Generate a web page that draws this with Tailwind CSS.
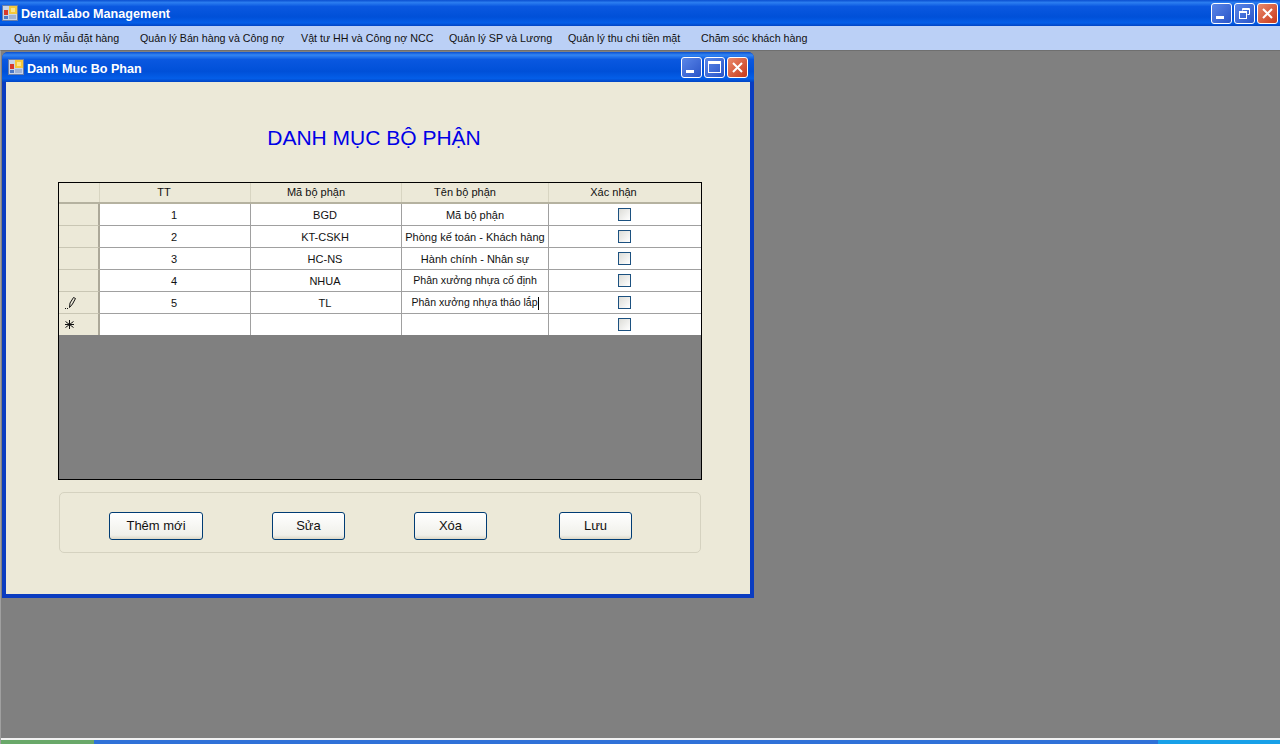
<!DOCTYPE html>
<html lang="en">
<head>
    <meta charset="UTF-8">
    <title>DentalLabo Management</title>
    <script src="https://cdn.jsdelivr.net/npm/@tailwindcss/browser@4"></script>
</head>
<body class="w-[1280px] h-[744px] overflow-hidden flex flex-col bg-[#808080] font-['Liberation_Sans',sans-serif]">

    <!-- main window title bar -->
    <header class="h-[26px] shrink-0 flex items-center pl-[2px] pr-[2px] bg-[linear-gradient(180deg,#0a4fd0_0%,#2b7df0_10%,#0a58e0_25%,#0050d8_65%,#045ee8_88%,#0044c4_100%)]">
        <svg width="16" height="16" viewBox="0 0 16 16" class="shrink-0">
            <rect x="0.5" y="0.5" width="15" height="15" fill="#c8d4e8" stroke="#6a7fa8"/>
            <rect x="7" y="1" width="8" height="8" fill="#f6c83a"/>
            <rect x="9" y="3" width="4" height="4" fill="#fbe58c"/>
            <rect x="2" y="5" width="4" height="5" fill="#d8392b"/>
            <rect x="2" y="11" width="4" height="3" fill="#4a78c8"/>
            <rect x="7" y="10" width="7" height="4" fill="#9fb2d4"/>
        </svg>
        <span class="ml-[3px] pt-[2px] text-[12.6px] font-bold text-white">DentalLabo Management</span>
        <div class="ml-auto flex gap-[2px]">
            <button class="w-[21px] h-[21px] rounded-[3px] border border-white bg-[linear-gradient(135deg,#5a86e8,#2a55c8)] flex items-end pl-[4px] pb-[4px]">
                <span class="block w-[8px] h-[3px] bg-white"></span>
            </button>
            <button class="w-[21px] h-[21px] rounded-[3px] border border-white bg-[linear-gradient(135deg,#5a86e8,#2a55c8)] flex items-center justify-center">
                <svg width="13" height="13" viewBox="0 0 13 13" fill="none" stroke="#fff">
                    <path d="M4.5 3.5V1.5H11.5V7.5H9.5"/><path d="M4.5 2.5H11.5" stroke-width="1"/>
                    <rect x="1.5" y="4.5" width="7" height="7"/><path d="M1.5 5.5H8.5"/>
                </svg>
            </button>
            <button class="w-[21px] h-[21px] rounded-[3px] border border-white bg-[linear-gradient(135deg,#ea8a6c,#c8381a)] flex items-center justify-center">
                <svg width="13" height="13" viewBox="0 0 13 13" fill="none" stroke="#fff" stroke-width="2">
                    <path d="M2 2L11 11M11 2L2 11"/>
                </svg>
            </button>
        </div>
    </header>

    <!-- menu -->
    <nav class="h-[24px] shrink-0 flex items-center pl-[14px] bg-[#bbd0f6] text-[10.7px] text-[#111] whitespace-nowrap">
        <span class="w-[126px]">Quản lý mẫu đặt hàng</span>
        <span class="w-[161px]">Quản lý Bán hàng và Công nợ</span>
        <span class="w-[148px]">Vật tư HH và Công nợ NCC</span>
        <span class="w-[119px]">Quản lý SP và Lương</span>
        <span class="w-[133px]">Quản lý thu chi tiền mặt</span>
        <span>Chăm sóc khách hàng</span>
    </nav>

    <main class="flex-1 min-h-0 flex flex-col border-t border-[#6f6f6f] border-l border-l-[#a0a0a0] bg-[#808080]">
        <div class="flex-1 min-h-0 pl-[1px] pt-[1px]">
            <!-- child window -->
            <section class="w-[752px] h-[546px] flex flex-col rounded-t-[6px] overflow-hidden bg-[#0a3cc0]">
                <div class="h-[30px] shrink-0 flex items-center pl-[6px] pr-[5px] bg-[linear-gradient(180deg,#0a4fd0_0%,#3385f2_10%,#0a58e0_25%,#0050d8_65%,#045ee8_88%,#0044c4_100%)]">
                    <svg width="16" height="16" viewBox="0 0 16 16" class="shrink-0">
                        <rect x="0.5" y="0.5" width="15" height="15" fill="#c8d4e8" stroke="#6a7fa8"/>
                        <rect x="7" y="1" width="8" height="8" fill="#f6c83a"/>
                        <rect x="9" y="3" width="4" height="4" fill="#fbe58c"/>
                        <rect x="2" y="5" width="4" height="5" fill="#d8392b"/>
                        <rect x="2" y="11" width="4" height="3" fill="#4a78c8"/>
                        <rect x="7" y="10" width="7" height="4" fill="#9fb2d4"/>
                    </svg>
                    <span class="ml-[3px] pt-[4px] text-[12.6px] font-bold text-white">Danh Muc Bo Phan</span>
                    <div class="ml-auto flex gap-[2px] pr-[1px]">
                        <button class="w-[21px] h-[21px] rounded-[3px] border border-white bg-[linear-gradient(135deg,#5a86e8,#2a55c8)] flex items-end pl-[4px] pb-[4px]">
                            <span class="block w-[8px] h-[3px] bg-white"></span>
                        </button>
                        <button class="w-[21px] h-[21px] rounded-[3px] border border-white bg-[linear-gradient(135deg,#5a86e8,#2a55c8)] flex items-center justify-center">
                            <span class="block w-[13px] h-[12px] border border-white border-t-[3px]"></span>
                        </button>
                        <button class="w-[21px] h-[21px] rounded-[3px] border border-white bg-[linear-gradient(135deg,#ea8a6c,#c8381a)] flex items-center justify-center">
                            <svg width="13" height="13" viewBox="0 0 13 13" fill="none" stroke="#fff" stroke-width="2">
                                <path d="M2 2L11 11M11 2L2 11"/>
                            </svg>
                        </button>
                    </div>
                </div>

                <div class="flex-1 min-h-0 mx-[4px] mb-[4px] bg-[#ece9d8] px-[52px] flex flex-col">
                    <h1 class="h-[100px] shrink-0 flex items-center justify-center pt-[12px] pr-[8px] text-[21px] text-[#0000e6]">DANH MỤC BỘ PHẬN</h1>

                    <!-- data grid -->
                    <div class="w-[644px] h-[298px] shrink-0 border border-black bg-[#808080] text-[11px] text-[#111]">
                        <div class="grid grid-cols-[41px_151px_151px_147px_152px] h-[21px] bg-[#ece9d8] border-b-2 border-b-[#b5b2a0]">
                            <div class="border-r border-[#d8d5c2]"></div>
                            <div class="border-r border-[#d8d5c2] text-center leading-[18px] pr-[22px]">TT</div>
                            <div class="border-r border-[#d8d5c2] text-center leading-[18px] pr-[20px]">Mã bộ phận</div>
                            <div class="border-r border-[#d8d5c2] text-center leading-[18px] pr-[20px]">Tên bộ phận</div>
                            <div class="text-center leading-[18px] pr-[23px]">Xác nhận</div>
                        </div>

                        <div class="grid grid-cols-[41px_151px_151px_147px_152px] auto-rows-[22px]">
                            <div class="bg-[#ece9d8] border-r-2 border-r-[#aca899] border-b border-b-[#c9c6b4]"></div>
                            <div class="bg-white border-r border-b border-[#a0a0a0] flex items-center justify-center pr-[2px] pt-[1px]">1</div>
                            <div class="bg-white border-r border-b border-[#a0a0a0] flex items-center justify-center pr-[2px] pt-[1px]">BGD</div>
                            <div class="bg-white border-r border-b border-[#a0a0a0] flex items-center justify-center pt-[1px]">Mã bộ phận</div>
                            <div class="bg-white border-b border-[#a0a0a0] flex items-center pl-[69px]"><span class="block w-[13px] h-[13px] border border-[#1c5180] bg-[linear-gradient(135deg,#dcdcd7,#ffffff)]"></span></div>

                            <div class="bg-[#ece9d8] border-r-2 border-r-[#aca899] border-b border-b-[#c9c6b4]"></div>
                            <div class="bg-white border-r border-b border-[#a0a0a0] flex items-center justify-center pr-[2px] pt-[1px]">2</div>
                            <div class="bg-white border-r border-b border-[#a0a0a0] flex items-center justify-center pr-[2px] pt-[1px]">KT-CSKH</div>
                            <div class="bg-white border-r border-b border-[#a0a0a0] flex items-center justify-center pt-[1px] whitespace-nowrap">Phòng kế toán - Khách hàng</div>
                            <div class="bg-white border-b border-[#a0a0a0] flex items-center pl-[69px]"><span class="block w-[13px] h-[13px] border border-[#1c5180] bg-[linear-gradient(135deg,#dcdcd7,#ffffff)]"></span></div>

                            <div class="bg-[#ece9d8] border-r-2 border-r-[#aca899] border-b border-b-[#c9c6b4]"></div>
                            <div class="bg-white border-r border-b border-[#a0a0a0] flex items-center justify-center pr-[2px] pt-[1px]">3</div>
                            <div class="bg-white border-r border-b border-[#a0a0a0] flex items-center justify-center pr-[2px] pt-[1px]">HC-NS</div>
                            <div class="bg-white border-r border-b border-[#a0a0a0] flex items-center justify-center pt-[1px]">Hành chính - Nhân sự</div>
                            <div class="bg-white border-b border-[#a0a0a0] flex items-center pl-[69px]"><span class="block w-[13px] h-[13px] border border-[#1c5180] bg-[linear-gradient(135deg,#dcdcd7,#ffffff)]"></span></div>

                            <div class="bg-[#ece9d8] border-r-2 border-r-[#aca899] border-b border-b-[#c9c6b4]"></div>
                            <div class="bg-white border-r border-b border-[#a0a0a0] flex items-center justify-center pr-[2px] pt-[1px]">4</div>
                            <div class="bg-white border-r border-b border-[#a0a0a0] flex items-center justify-center pr-[2px] pt-[1px]">NHUA</div>
                            <div class="bg-white border-r border-b border-[#a0a0a0] flex items-center justify-center pt-[1px] text-[10.6px]">Phân xưởng nhựa cố định</div>
                            <div class="bg-white border-b border-[#a0a0a0] flex items-center pl-[69px]"><span class="block w-[13px] h-[13px] border border-[#1c5180] bg-[linear-gradient(135deg,#dcdcd7,#ffffff)]"></span></div>

                            <!-- row being edited -->
                            <div class="bg-[#ece9d8] border-r-2 border-r-[#aca899] border-b border-b-[#c9c6b4] flex items-center pl-[6px]">
                                <svg width="12" height="14" viewBox="0 0 12 14" fill="none" stroke="#111">
                                    <path d="M4.5 11.5L5 7L8.5 1.5L10.5 2.5L7.5 8L4.5 11.5Z"/>
                                    <path d="M0 12.5H1M2 12.5H3" />
                                </svg>
                            </div>
                            <div class="bg-white border-r border-b border-[#a0a0a0] flex items-center justify-center pr-[2px] pt-[1px]">5</div>
                            <div class="bg-white border-r border-b border-[#a0a0a0] flex items-center justify-center pr-[2px] pt-[1px]">TL</div>
                            <div class="bg-white border-r border-b border-[#a0a0a0] flex items-center justify-center pt-[1px] text-[10.5px] whitespace-nowrap">Phân xưởng nhựa tháo lắp<span class="inline-block w-px h-[13px] bg-black"></span></div>
                            <div class="bg-white border-b border-[#a0a0a0] flex items-center pl-[69px]"><span class="block w-[13px] h-[13px] border border-[#1c5180] bg-[linear-gradient(135deg,#dcdcd7,#ffffff)]"></span></div>

                            <!-- new row -->
                            <div class="h-[21px] bg-[#ece9d8] border-r-2 border-r-[#aca899] flex items-center pl-[5px]">
                                <svg width="11" height="11" viewBox="0 0 11 11" fill="none" stroke="#111">
                                    <path d="M5.5 1V10M1.5 2.5L9.5 8.5M9.5 2.5L1.5 8.5M1 5.5H10"/>
                                </svg>
                            </div>
                            <div class="h-[21px] bg-white border-r border-[#a0a0a0]"></div>
                            <div class="h-[21px] bg-white border-r border-[#a0a0a0]"></div>
                            <div class="h-[21px] bg-white border-r border-[#a0a0a0]"></div>
                            <div class="h-[21px] bg-white flex items-center pl-[69px]"><span class="block w-[13px] h-[13px] border border-[#1c5180] bg-[linear-gradient(135deg,#dcdcd7,#ffffff)]"></span></div>
                        </div>
                    </div>

                    <!-- action buttons -->
                    <div class="mt-[12px] ml-[1px] w-[642px] h-[61px] shrink-0 rounded-[5px] border border-[#d5d2c0] flex items-start pt-[19px] pl-[49px] text-[13px] text-[#111]">
                        <button class="w-[94px] h-[28px] rounded-[3px] border border-[#003c74] bg-[linear-gradient(180deg,#ffffff,#f0f0ea_85%,#dcd8c8)]">Thêm mới</button>
                        <button class="ml-[69px] w-[73px] h-[28px] rounded-[3px] border border-[#003c74] bg-[linear-gradient(180deg,#ffffff,#f0f0ea_85%,#dcd8c8)]">Sửa</button>
                        <button class="ml-[69px] w-[73px] h-[28px] rounded-[3px] border border-[#003c74] bg-[linear-gradient(180deg,#ffffff,#f0f0ea_85%,#dcd8c8)]">Xóa</button>
                        <button class="ml-[72px] w-[73px] h-[28px] rounded-[3px] border border-[#003c74] bg-[linear-gradient(180deg,#ffffff,#f0f0ea_85%,#dcd8c8)]">Lưu</button>
                    </div>
                </div>
            </section>
        </div>

        <!-- taskbar edge -->
        <div class="h-[2px] shrink-0 bg-[#f2f2f2]"></div>
        <div class="h-[4px] shrink-0 flex">
            <div class="w-[93px] bg-[#69a869]"></div>
            <div class="flex-1 bg-[#2f71d8]"></div>
            <div class="w-[122px] bg-[#18a0e8]"></div>
        </div>
    </main>
</body>
</html>
